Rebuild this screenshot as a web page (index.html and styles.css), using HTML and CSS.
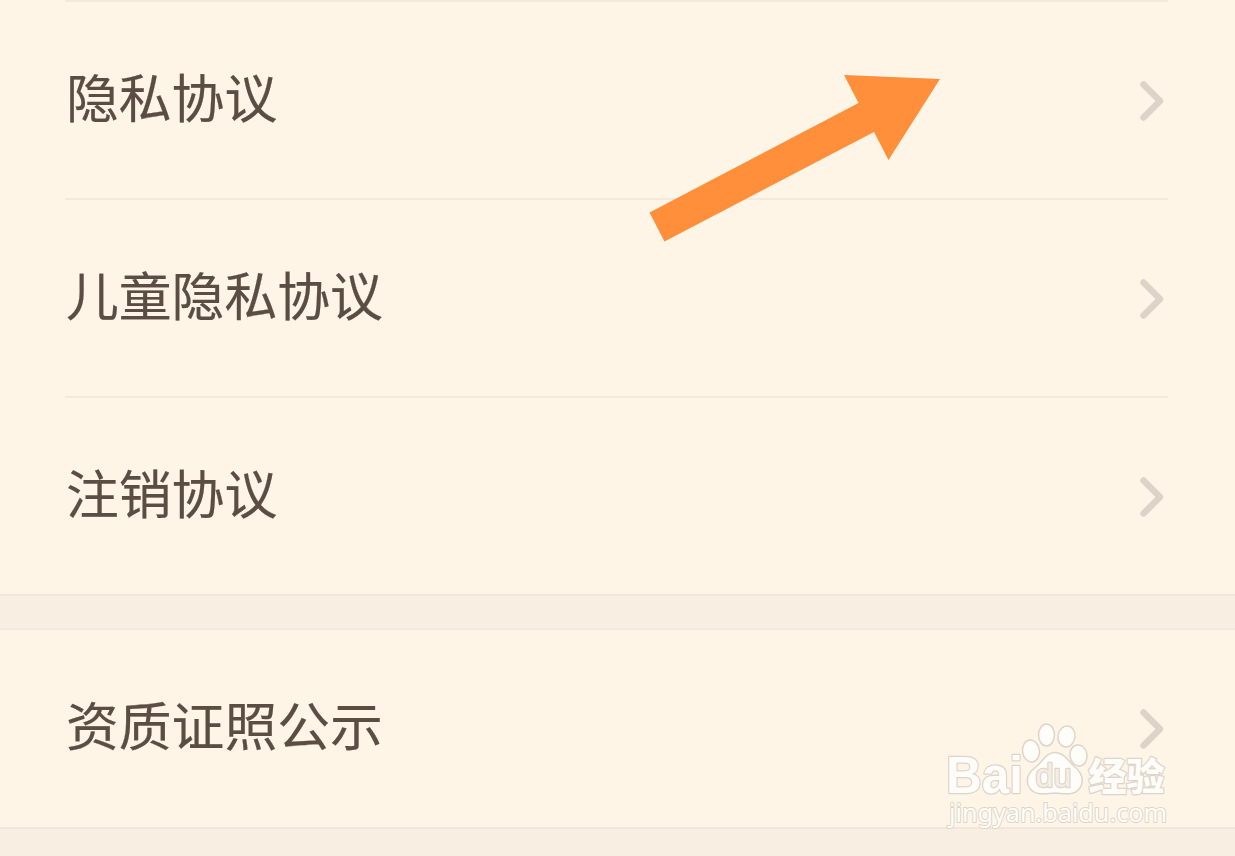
FILE: index.html
```html
<!DOCTYPE html>
<html lang="zh-CN">
<head>
<meta charset="utf-8">
<title>协议</title>
<link rel="stylesheet" href="styles.css">
</head>
<body>
<main class="screen">
  <section class="group">
    <div class="row"><span class="label">隐私协议</span><svg class="chevron" viewBox="0 0 26 42"><path d="M4.500 4.500 L21 21 L4.500 37.500"/></svg></div>
    <div class="row"><span class="label">儿童隐私协议</span><svg class="chevron" viewBox="0 0 26 42"><path d="M4.500 4.500 L21 21 L4.500 37.500"/></svg></div>
    <div class="row"><span class="label">注销协议</span><svg class="chevron" viewBox="0 0 26 42"><path d="M4.500 4.500 L21 21 L4.500 37.500"/></svg></div>
  </section>
  <div class="gap"></div>
  <section class="group">
    <div class="row"><span class="label">资质证照公示</span><svg class="chevron" viewBox="0 0 26 42"><path d="M4.500 4.500 L21 21 L4.500 37.500"/></svg></div>
  </section>
  <div class="gap"></div>
  <svg class="arrow" viewBox="640 65 310 185"><path d="M649.500 212.500 L858.500 103 L844 75 L940 79 L888.500 160 L874 132 L664.500 241.500 Z"/></svg>
  <svg class="watermark" viewBox="935 715 245 120">
    <g class="mark">
      <text class="latin-edge" x="946" y="792.5" textLength="77" lengthAdjust="spacingAndGlyphs">Bai</text>
      <ellipse cx="1031" cy="751" rx="8.5" ry="11" transform="rotate(-8 1031 751)"/>
      <ellipse cx="1046.5" cy="735" rx="8" ry="11"/>
      <ellipse cx="1066.5" cy="736.5" rx="8.5" ry="10.5" transform="rotate(8 1066.5 736.5)"/>
      <ellipse cx="1078.5" cy="755.5" rx="8.5" ry="10.5" transform="rotate(-8 1078.5 755.5)"/>
      <path d="M1055 752.5 C1064 752.5 1068 761 1074 766 C1081 772 1084 779 1081 786 C1077 796 1066 794 1055 793 C1044 794 1034 796 1029 787 C1025 779 1029 772 1036 767 C1043 761 1046 752.5 1055 752.5 Z"/>
      <text class="du" x="1035.5" y="787" textLength="36" lengthAdjust="spacingAndGlyphs">du</text>
      <text class="han" x="1088.5" y="789.5" textLength="76" lengthAdjust="spacingAndGlyphs">经验</text>
      <text class="url" x="949" y="821.5" textLength="218" lengthAdjust="spacingAndGlyphs">jingyan.baidu.com</text>
    </g>
  </svg>
</main>
</body>
</html>
```
FILE: styles.css
```css
body {
  margin: 0;
  background: #fff5e6;
}

.screen {
  position: relative;
  height: 856px;
  overflow: hidden;
  font-family: "Noto Sans CJK SC", sans-serif;
  color: #5b4d43;
}

.group {
  padding: 0 67px 0 65px;
}

.row {
  display: flex;
  align-items: center;
  justify-content: space-between;
  box-sizing: border-box;
  height: 198px;
  padding: 0 3px 0 1px;
  border-top: 2px solid #f4eadc;
}

.label {
  font-size: 52.8px;
  line-height: 76px;
  padding-bottom: 10px;
  -webkit-text-stroke: 0.2px #5b4d43;
}

.chevron {
  width: 26px;
  height: 42px;
  margin-top: 2px;
}

.chevron path {
  fill: none;
  stroke: #ddd3c8;
  stroke-width: 6.5;
  stroke-linecap: round;
  stroke-linejoin: round;
}

.gap {
  box-sizing: border-box;
  height: 36px;
  background: #f8eee2;
  border-top: 2px solid #f2e7da;
  border-bottom: 2px solid #f4e9dd;
}

.gap + .group .row {
  height: 197px;
  padding-bottom: 4px;
  border-top-color: transparent;
}

.arrow {
  position: absolute;
  left: 640px;
  top: 65px;
  width: 310px;
  height: 185px;
  fill: #ff8f3b;
}

.watermark {
  position: absolute;
  left: 935px;
  top: 715px;
  width: 245px;
  height: 120px;
}

.mark {
  fill: #fffdf9;
  stroke: #ded5ca;
  stroke-width: 1.5;
  stroke-linejoin: round;
}

.mark text {
  paint-order: stroke;
  stroke-width: 2.5;
}

.mark .latin-edge {
  font: bold 52px "Liberation Sans", sans-serif;
}

.mark .du {
  font: 34px "Liberation Sans", sans-serif;
  fill: #f6eee3;
}

.mark .han {
  font: 900 38px "Noto Sans CJK SC", sans-serif;
}

.mark .url {
  font: 25px "Noto Sans", sans-serif;
  stroke-width: 2;
}
```
